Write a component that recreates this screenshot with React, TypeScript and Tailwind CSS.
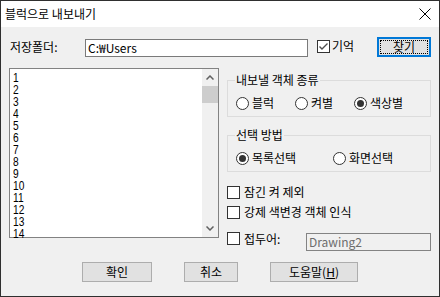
import React from "react";

const font = { fontFamily: '"Noto Sans CJK KR", "Noto Sans", sans-serif' };

function Radio({ checked }: { checked?: boolean }) {
  return (
    <span className="relative inline-flex h-[13px] w-[13px] shrink-0 items-center justify-center rounded-full border border-[#333333] bg-white">
      {checked && <span className="h-[7px] w-[7px] rounded-full bg-[#333333]" />}
    </span>
  );
}

function Check({ checked }: { checked?: boolean }) {
  return (
    <span className="inline-flex h-[13px] w-[13px] shrink-0 items-center justify-center border border-[#333333] bg-white">
      {checked && (
        <svg width="11" height="11" viewBox="0 0 11 11">
          <path d="M1.5 5.5 L4 8 L9.5 2.5" stroke="#4d4d4d" strokeWidth="1.4" fill="none" />
        </svg>
      )}
    </span>
  );
}

function Group({ title, children }: { title: string; children: React.ReactNode }) {
  return (
    <fieldset className="m-0 border border-[#dcdcdc] px-[8px] pb-[3px] pt-0">
      <legend className="ml-[-1px] h-[16px] px-[1px] text-[12px] leading-[16px]">{title}</legend>
      <div className="mt-[5px] flex h-[20px] items-center">{children}</div>
    </fieldset>
  );
}

function RadioItem({ label, checked, w }: { label: string; checked?: boolean; w?: string }) {
  return (
    <div className={"flex items-center gap-[3px] " + (w ?? "")}>
      <Radio checked={checked} />
      <span className="text-[12px] leading-[16px]">{label}</span>
    </div>
  );
}

function Btn({ children, w }: { children: React.ReactNode; w: string }) {
  return (
    <div
      className={
        "flex h-[20px] items-center justify-center border border-[#adadad] bg-[#e1e1e1] text-[12px] leading-[16px] " + w
      }
    >
      {children}
    </div>
  );
}

export default function App() {
  const items = Array.from({ length: 14 }, (_, i) => String(i + 1));
  return (
    <div
      className="flex h-[297px] w-[440px] flex-col overflow-hidden border border-[#2f2f2f] bg-[#f0f0f0] text-black"
      style={font}
    >
      {/* Title bar */}
      <div className="flex h-[26px] shrink-0 items-center bg-white pl-[4px] pr-[8px]">
        <span className="text-[12px] leading-[16px]">블럭으로 내보내기</span>
        <svg className="ml-auto" width="12" height="12" viewBox="0 0 12 12">
          <path d="M0.5 0.5 L11.5 11.5 M11.5 0.5 L0.5 11.5" stroke="#000" strokeWidth="1" />
        </svg>
      </div>

      {/* Row 1 */}
      <div className="mt-[10px] flex items-start pl-[9px]">
        <span className="mt-[1px] h-[18px] w-[75px] text-[12px] leading-[18px]">저장폴더:</span>
        <div className="mt-[2px] flex h-[18px] w-[223px] items-center border border-[#7a7a7a] bg-white pl-[2px] text-[12px] leading-[16px]">
          C:₩Users
        </div>
        <div className="ml-[9px] mt-[2px] flex items-center gap-[2px]">
          <Check checked />
          <span className="text-[12px] leading-[14px]">기억</span>
        </div>
        <div className="ml-auto mr-[8px] flex h-[20px] w-[54px] items-center justify-center border-2 border-[#0078d7] bg-[#e1e1e1] p-[1px]">
          <div className="flex h-full w-full items-center justify-center border border-dotted border-black text-[12px] leading-[12px]">
            찾기
          </div>
        </div>
      </div>

      {/* Row 2 */}
      <div className="mt-[11px] flex items-start pl-[8px]">
        {/* List */}
        <div className="flex h-[170px] w-[210px] border border-[#828282] bg-white">
          <div className="flex-1 pl-[3px]">
            {items.map((n) => (
              <div key={n} className="h-[12px] leading-[12px]">
                <span
                  className="inline-block origin-left scale-x-[0.85] scale-y-[1.12] text-[12px] leading-[12px]"
                  style={{ fontFamily: '"Liberation Sans", Arial, sans-serif' }}
                >
                  {n}
                </span>
              </div>
            ))}
          </div>
          <div className="flex w-[16px] flex-col bg-[#f0f0f0]">
            <div className="flex h-[17px] items-center justify-center">
              <svg width="8" height="5" viewBox="0 0 8 5">
                <path d="M0.5 4.5 L4 1 L7.5 4.5" stroke="#606060" strokeWidth="1.5" fill="none" />
              </svg>
            </div>
            <div className="h-[17px] bg-[#cdcdcd]" />
            <div className="flex-1" />
            <div className="flex h-[17px] items-center justify-center">
              <svg width="8" height="5" viewBox="0 0 8 5">
                <path d="M0.5 0.5 L4 4 L7.5 0.5" stroke="#606060" strokeWidth="1.5" fill="none" />
              </svg>
            </div>
          </div>
        </div>

        {/* Right column */}
        <div className="ml-[8px] mt-[4px] flex w-[204px] flex-col">
          <Group title="내보낼 객체 종류">
            <RadioItem label="블럭" w="w-[59px]" />
            <RadioItem label="켜별" w="w-[59px]" />
            <RadioItem label="색상별" checked />
          </Group>
          <div className="mt-[10px]">
            <Group title="선택 방법">
              <RadioItem label="목록선택" checked w="w-[97px]" />
              <RadioItem label="화면선택" />
            </Group>
          </div>
          <div className="mt-[10px] flex h-[20px] items-center gap-[4px]">
            <Check />
            <span className="text-[12px] leading-[16px]">잠긴 켜 제외</span>
          </div>
          <div className="flex h-[20px] items-center gap-[4px]">
            <Check />
            <span className="text-[12px] leading-[16px]">강제 색변경 객체 인식</span>
          </div>
          <div className="mt-[9px] flex items-start">
            <div className="mt-[1px] flex items-center gap-[4px]">
              <Check />
              <span className="text-[12px] leading-[13px]">접두어:</span>
            </div>
            <div className="ml-auto mt-[2px] flex h-[18px] w-[125px] items-center border border-[#838383] bg-[#f0f0f0] pl-[2px] text-[12px] leading-[16px] text-[#6d6d6d]">
              Drawing2
            </div>
          </div>
        </div>
      </div>

      {/* Buttons */}
      <div className="mt-[11px] flex gap-[32px] pl-[81px]">
        <Btn w="w-[70px]">확인</Btn>
        <Btn w="w-[54px]">취소</Btn>
        <Btn w="w-[88px]">
          도움말(<span className="underline">H</span>)
        </Btn>
      </div>
    </div>
  );
}
